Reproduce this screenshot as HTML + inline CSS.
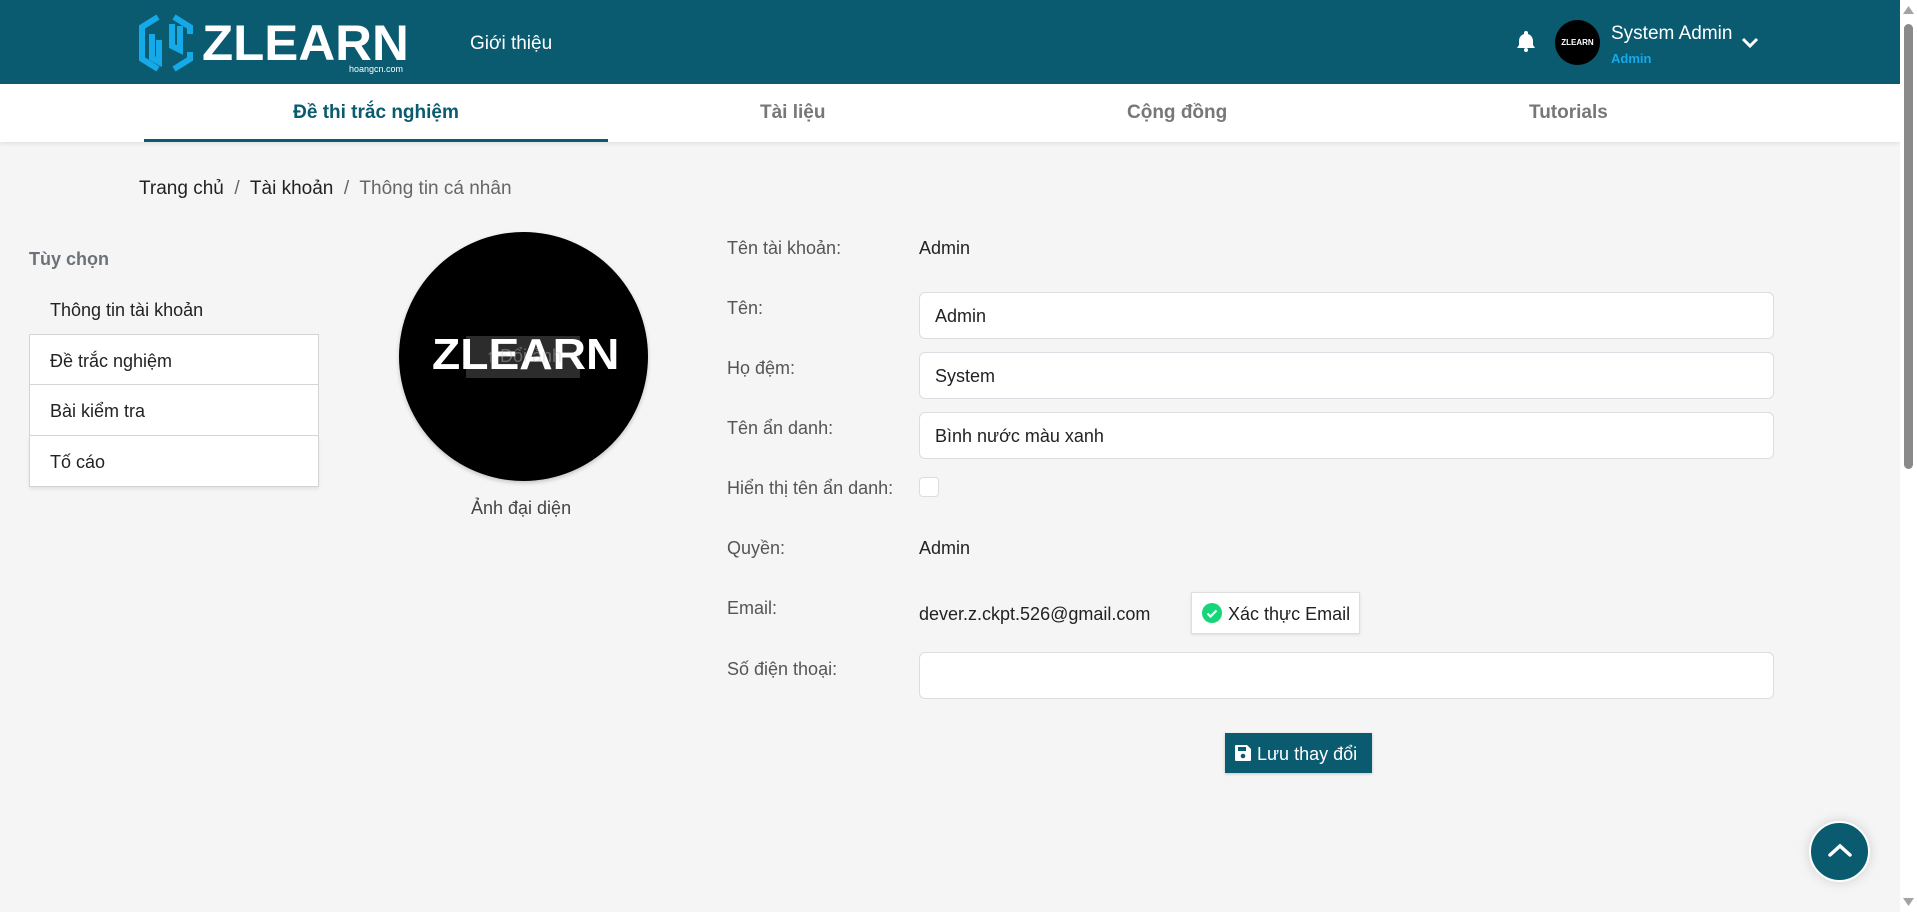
<!DOCTYPE html>
<html><head><meta charset="utf-8">
<style>
*{box-sizing:border-box;margin:0;padding:0}
body{width:1917px;height:912px;overflow:hidden;background:#f5f5f6;font-family:"Liberation Sans","DejaVu Sans",sans-serif;color:#222;position:relative;font-size:18px}
.a{position:absolute;white-space:nowrap}
.hdr{left:0;top:0;width:1900px;height:84px;background:#0a5a70}
.nav{left:0;top:84px;width:1900px;height:58px;background:#fff;box-shadow:0 2px 4px rgba(0,0,0,.08)}
.tab{top:102px;font-weight:bold;font-size:19px;color:#777}
.lbl{left:727px;color:#555;font-size:18px}
.inp{left:919px;width:855px;height:47px;background:#fff;border:1px solid #dcdde2;border-radius:6px;padding:0 15px;line-height:47px;font-size:18px;color:#222}
.li{left:29px;width:290px;height:51px;background:#fff;border:1px solid #d4d4d4;padding-left:20px;line-height:53px;font-size:18px}
</style></head><body>
<div class="a hdr"></div>
<svg class="a" style="left:138px;top:12px" width="56" height="62" viewBox="0 0 56 62">
<g fill="none" stroke="#16a9e8" stroke-width="6" stroke-linejoin="miter">
<path d="M20 5 L4 15 V47 L20 57"/><path d="M36 5 L52 15 V22"/><path d="M52 40 V47 L36 57"/>
<path d="M14 22 V46 L21 50 V28"/><path d="M34 12 V34 L42 38 V14"/></g></svg>
<div class="a" style="left:202px;top:14px;font-size:50px;font-weight:bold;color:#fff;transform:scaleX(1.02);transform-origin:left">ZLEARN</div>
<div class="a" style="left:349px;top:64px;font-size:9px;color:#fff">hoangcn.com</div>
<div class="a" style="left:470px;top:33px;font-size:19px;color:#fff">Giới thiệu</div>
<svg class="a" style="left:1516px;top:30px" width="20" height="22" viewBox="0 0 20 22"><path d="M10 1a2 2 0 0 1 2 2v1c3 1 5 3.5 5 7v4l2 3H1l2-3v-4c0-3.5 2-6 5-7V3a2 2 0 0 1 2-2z" fill="#fff"/><circle cx="10" cy="20" r="2" fill="#fff"/></svg>
<div class="a" style="left:1555px;top:20px;width:45px;height:45px;border-radius:50%;background:#000;color:#fff;font-size:8px;font-weight:bold;text-align:center;line-height:45px">ZLEARN</div>
<div class="a" style="left:1611px;top:23px;font-size:19px;color:#fff">System Admin</div>
<div class="a" style="left:1611px;top:51px;font-size:13px;font-weight:bold;color:#16a9e8">Admin</div>
<svg class="a" style="left:1740px;top:36px" width="20" height="14" viewBox="0 0 20 14"><path d="M3 3l7 7 7-7" fill="none" stroke="#fff" stroke-width="3"/></svg>
<div class="a nav"></div>
<div class="a tab" style="left:144px;width:464px;text-align:center;color:#0a5a70">Đề thi trắc nghiệm</div>
<div class="a" style="left:144px;top:139px;width:464px;height:3px;background:#0a5a70"></div>
<div class="a tab" style="left:760px">Tài liệu</div>
<div class="a tab" style="left:1127px">Cộng đồng</div>
<div class="a tab" style="left:1529px">Tutorials</div>
<div class="a" style="left:139px;top:178px;font-size:19px"><span style="color:#222">Trang chủ</span> <span style="color:#666">&nbsp;/&nbsp;</span> Tài khoản <span style="color:#666">&nbsp;/&nbsp; Thông tin cá nhân</span></div>
<div class="a" style="left:29px;top:249px;font-size:18px;font-weight:bold;color:#6c7278">Tùy chọn</div>
<div class="a" style="left:50px;top:300px;font-size:18px">Thông tin tài khoản</div>
<div class="a li" style="top:334px">Đề trắc nghiệm</div>
<div class="a li" style="top:385px;border-top:none">Bài kiểm tra</div>
<div class="a li" style="top:436px;border-top:none;box-shadow:0 2px 3px rgba(0,0,0,.08)">Tố cáo</div>
<div class="a" style="left:399px;top:232px;width:249px;height:249px;border-radius:50%;background:#000;box-shadow:0 2px 4px rgba(0,0,0,.2)"></div>
<div class="a" style="left:466px;top:336px;width:114px;height:42px;background:rgba(80,80,80,.55)"></div>
<div class="a" style="left:432px;top:330px;font-size:44px;font-weight:bold;color:#fff;transform:scaleX(1.05);transform-origin:left">ZLEARN</div>
<div class="a" style="left:486px;top:346px;font-size:18px;color:rgba(200,200,200,.4)">↑ Đổi ảnh</div>
<div class="a" style="left:471px;top:498px;font-size:18px;color:#444">Ảnh đại diện</div>
<div class="a lbl" style="top:238px">Tên tài khoản:</div><div class="a" style="left:919px;top:238px">Admin</div>
<div class="a lbl" style="top:298px">Tên:</div><div class="a inp" style="top:292px">Admin</div>
<div class="a lbl" style="top:358px">Họ đệm:</div><div class="a inp" style="top:352px">System</div>
<div class="a lbl" style="top:418px">Tên ẩn danh:</div><div class="a inp" style="top:412px">Bình nước màu xanh</div>
<div class="a lbl" style="top:478px">Hiển thị tên ẩn danh:</div>
<div class="a" style="left:919px;top:477px;width:20px;height:20px;border:1px solid #dcdde2;border-radius:4px;background:#fff"></div>
<div class="a lbl" style="top:538px">Quyền:</div><div class="a" style="left:919px;top:538px">Admin</div>
<div class="a lbl" style="top:598px">Email:</div><div class="a" style="left:919px;top:604px">dever.z.ckpt.526@gmail.com</div>
<div class="a" style="left:1191px;top:592px;width:169px;height:42px;background:#fff;border:1px solid #ddd;box-shadow:0 1px 3px rgba(0,0,0,.1)"></div>
<svg class="a" style="left:1202px;top:603px" width="20" height="20" viewBox="0 0 20 20"><circle cx="10" cy="10" r="10" fill="#17d67a"/><path d="M5.5 10.5l3 3 6-6" fill="none" stroke="#fff" stroke-width="2.2"/></svg>
<div class="a" style="left:1228px;top:604px;font-size:18px">Xác thực Email</div>
<div class="a lbl" style="top:659px">Số điện thoại:</div><div class="a inp" style="top:652px"></div>
<div class="a" style="left:1225px;top:733px;width:147px;height:40px;background:#0a5a70;box-shadow:0 1px 3px rgba(0,0,0,.2)"></div>
<svg class="a" style="left:1234px;top:744px" width="18" height="18" viewBox="0 0 18 18"><path d="M1 2a1 1 0 0 1 1-1h11l4 4v11a1 1 0 0 1-1 1H2a1 1 0 0 1-1-1z" fill="#fff"/><rect x="4" y="3" width="8" height="4" fill="#0a5a70"/><circle cx="9" cy="12" r="2.3" fill="#0a5a70"/></svg>
<div class="a" style="left:1257px;top:744px;font-size:18px;color:#fff">Lưu thay đổi</div>
<div class="a" style="left:1809px;top:821px;width:61px;height:61px;border-radius:50%;background:#0a5a70;border:2px solid #fff;box-shadow:0 0 12px rgba(0,0,0,.15)"></div>
<svg class="a" style="left:1826px;top:838px" width="28" height="24" viewBox="0 0 28 24"><path d="M4 17l10-9 10 9" fill="none" stroke="#fff" stroke-width="3.5" stroke-linecap="round"/></svg>
<div class="a" style="left:1900px;top:0;width:17px;height:912px;background:#fff"></div>
<div class="a" style="left:1904px;top:24px;width:9px;height:445px;border-radius:5px;background:#8a8a8a"></div>
<svg class="a" style="left:1903px;top:6px" width="11" height="8"><path d="M0 8L5.5 0 11 8z" fill="#a3a3a3"/></svg>
<svg class="a" style="left:1903px;top:898px" width="11" height="8"><path d="M0 0L5.5 8 11 0z" fill="#a3a3a3"/></svg>
</body></html>
